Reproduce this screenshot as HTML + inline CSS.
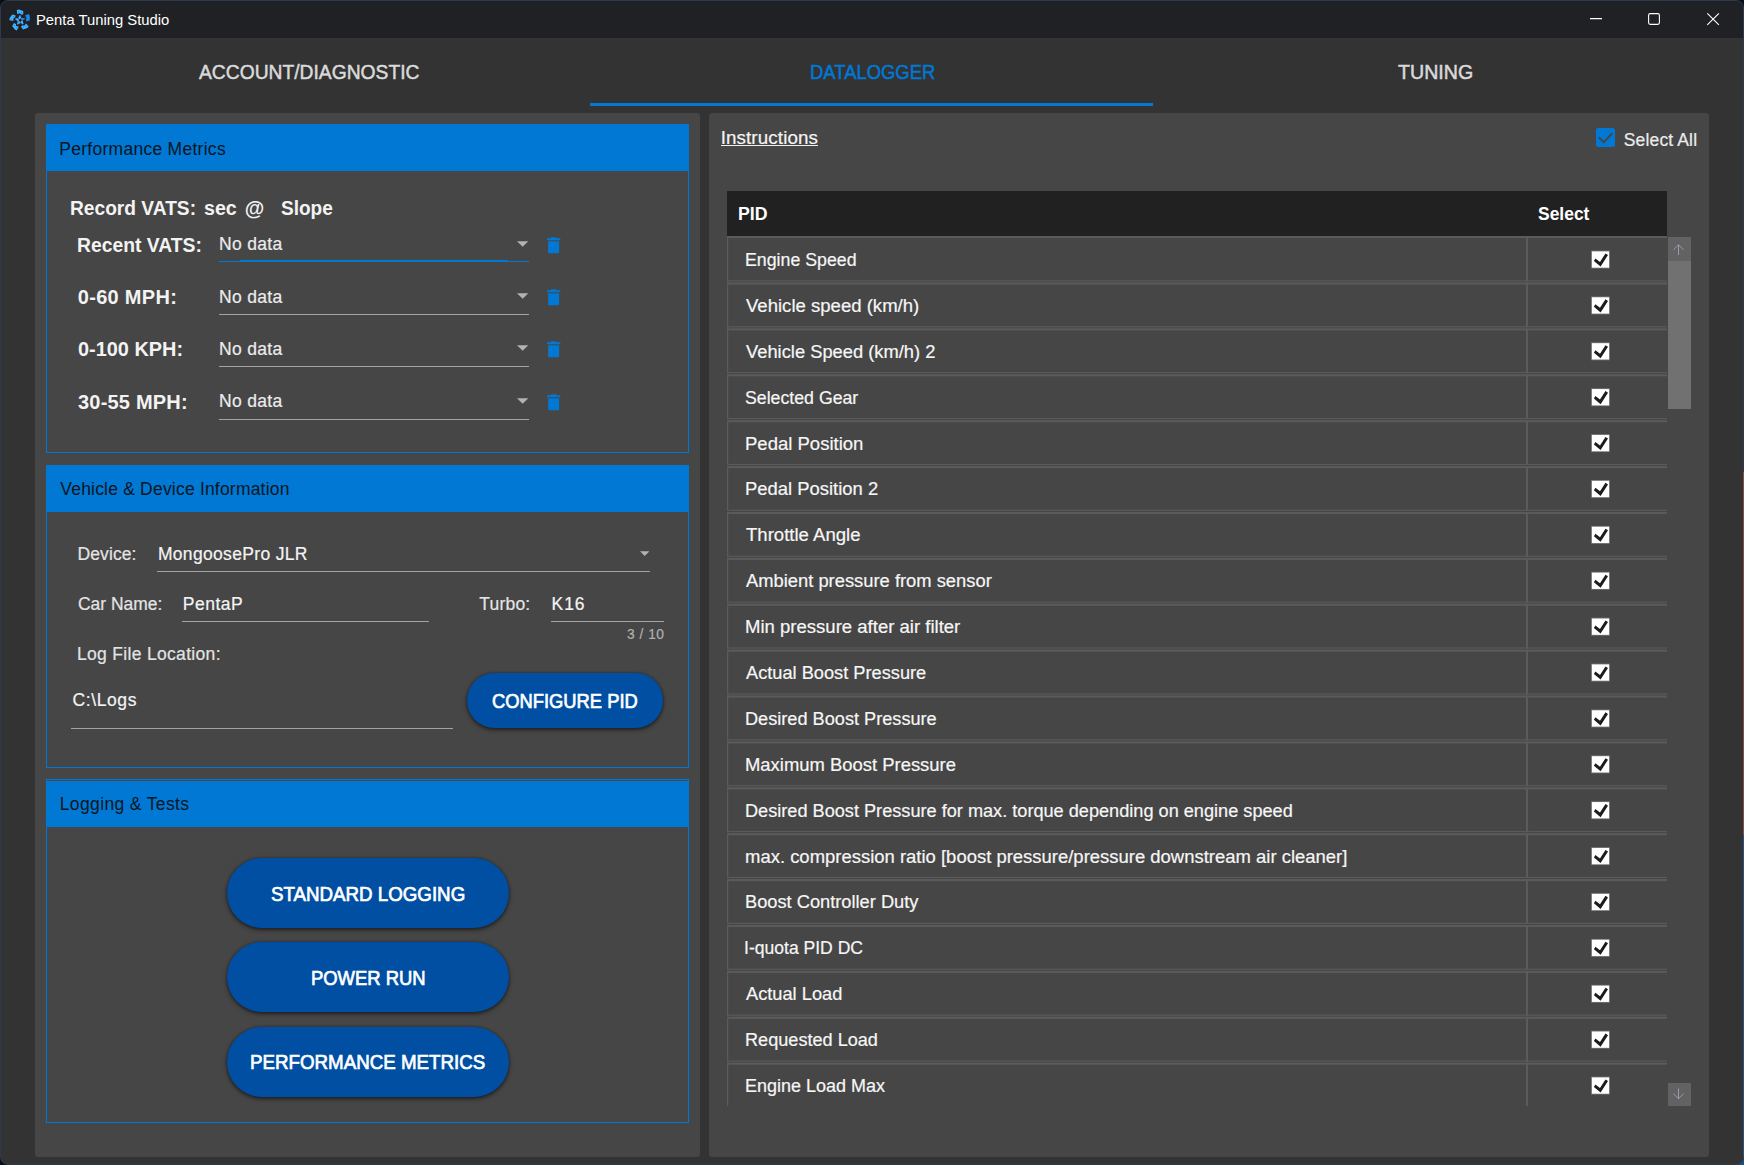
<!DOCTYPE html>
<html lang="en"><head><meta charset="utf-8"><title>Penta Tuning Studio</title>
<style>
html,body{margin:0;padding:0;}
body{width:1744px;height:1165px;overflow:hidden;background:#071019;position:relative;font-family:"Liberation Sans",sans-serif;color:#fff;}
#win{position:absolute;left:0;top:0;width:1742px;height:1163px;border:1px solid #2c3a4c;border-radius:8px;background:#333333;overflow:hidden;}
#win>*{margin-left:-1px;margin-top:-1px;}
.t{position:absolute;white-space:nowrap;transform-origin:0 50%;}
.b{font-weight:bold;}
.m{-webkit-text-stroke:0.5px currentColor;}
.s{-webkit-text-stroke:0.2px currentColor;}
.m2{-webkit-text-stroke:0.7px currentColor;}
.btn{position:absolute;background:#004fa3;box-shadow:0 2px 4px rgba(0,0,0,.5),0 0 3px rgba(0,0,0,.35);}
</style></head><body><div id="win">
<div style="position:absolute;left:0px;top:0px;width:1744px;height:38px;background:#1f2125;"></div>
<svg style="position:absolute;left:8px;top:7.6px" width="24" height="24" viewBox="0 0 24 24"><g transform="translate(12.1 12.2)" fill="#43b3ff"><g transform="rotate(0)"><path d="M-3.3 -10.2L-1.2 -10.6L3.1 -9.3L3.2 -5.9L1.2 -5.5L-0.2 -6.9L-2.9 -6.1Z"/><path d="M0.3 -5.0L1.1 -2.2L-0.5 -0.9L-2.1 -2.1L-0.9 -3.6L-0.9 -4.9Z"/><circle cx="-1.6" cy="-8.6" r="0.55" fill="#0b84ee"/><circle cx="1.4" cy="-7.6" r="0.55" fill="#0b84ee"/></g><g transform="rotate(72)" fill="#1e86e4"><path d="M-3.3 -10.2L-1.2 -10.6L3.1 -9.3L3.2 -5.9L1.2 -5.5L-0.2 -6.9L-2.9 -6.1Z"/><path d="M0.3 -5.0L1.1 -2.2L-0.5 -0.9L-2.1 -2.1L-0.9 -3.6L-0.9 -4.9Z"/><circle cx="-1.6" cy="-8.6" r="0.55" fill="#0b84ee"/><circle cx="1.4" cy="-7.6" r="0.55" fill="#0b84ee"/></g><g transform="rotate(144)"><path d="M-3.3 -10.2L-1.2 -10.6L3.1 -9.3L3.2 -5.9L1.2 -5.5L-0.2 -6.9L-2.9 -6.1Z"/><path d="M0.3 -5.0L1.1 -2.2L-0.5 -0.9L-2.1 -2.1L-0.9 -3.6L-0.9 -4.9Z"/><circle cx="-1.6" cy="-8.6" r="0.55" fill="#0b84ee"/><circle cx="1.4" cy="-7.6" r="0.55" fill="#0b84ee"/></g><g transform="rotate(216)"><path d="M-3.3 -10.2L-1.2 -10.6L3.1 -9.3L3.2 -5.9L1.2 -5.5L-0.2 -6.9L-2.9 -6.1Z"/><path d="M0.3 -5.0L1.1 -2.2L-0.5 -0.9L-2.1 -2.1L-0.9 -3.6L-0.9 -4.9Z"/><circle cx="-1.6" cy="-8.6" r="0.55" fill="#0b84ee"/><circle cx="1.4" cy="-7.6" r="0.55" fill="#0b84ee"/></g><g transform="rotate(288)"><path d="M-3.3 -10.2L-1.2 -10.6L3.1 -9.3L3.2 -5.9L1.2 -5.5L-0.2 -6.9L-2.9 -6.1Z"/><path d="M0.3 -5.0L1.1 -2.2L-0.5 -0.9L-2.1 -2.1L-0.9 -3.6L-0.9 -4.9Z"/><circle cx="-1.6" cy="-8.6" r="0.55" fill="#0b84ee"/><circle cx="1.4" cy="-7.6" r="0.55" fill="#0b84ee"/></g></g></svg>
<span id="title" class="t " style="left:35.50px;top:11.00px;font-size:15px;line-height:18.0px;transform:scaleX(0.9863);">Penta Tuning Studio</span>
<svg style="position:absolute;left:1580px;top:0" width="164" height="37" viewBox="0 0 164 37" fill="none" stroke="#fff" stroke-width="1.1">
<path d="M10 18.6h12"/>
<rect x="68.6" y="13.6" width="10.8" height="10.8" rx="1.6"/>
<path d="M127.3 13.3l11.6 11.6M138.9 13.3l-11.6 11.6"/>
</svg>
<span id="tab1" class="t m" style="left:199.19px;top:60.01px;font-size:20px;line-height:24.0px;color:#dadada;transform:scaleX(0.9631);">ACCOUNT/DIAGNOSTIC</span>
<span id="tab2" class="t m" style="left:809.60px;top:60.01px;font-size:20px;line-height:24.0px;color:#0078d4;transform:scaleX(0.9217);">DATALOGGER</span>
<span id="tab3" class="t m" style="left:1398.00px;top:60.01px;font-size:20px;line-height:24.0px;color:#dadada;transform:scaleX(0.9817);">TUNING</span>
<div style="position:absolute;left:590px;top:103px;width:563px;height:3px;background:#0078d4;"></div>
<div style="position:absolute;left:35px;top:113px;width:665px;height:1044px;background:#464646;border-radius:3px;"></div>
<div style="position:absolute;left:709px;top:113px;width:1000px;height:1044px;background:#464646;border-radius:3px;"></div>
<div style="position:absolute;left:46px;top:124px;width:643px;height:329px;background:transparent;box-sizing:border-box;border:1px solid #0078d4;"></div>
<div style="position:absolute;left:46px;top:124px;width:643px;height:47px;background:#0078d4;"></div>
<span id="g1" class="t " style="left:59.26px;top:139.00px;font-size:17.5px;line-height:21.0px;color:#0b1622;letter-spacing:0.276px;">Performance Metrics</span>
<div style="position:absolute;left:46px;top:465px;width:643px;height:303px;background:transparent;box-sizing:border-box;border:1px solid #0078d4;"></div>
<div style="position:absolute;left:46px;top:465px;width:643px;height:47px;background:#0078d4;"></div>
<span id="g2" class="t " style="left:60.30px;top:479.00px;font-size:17.5px;line-height:21.0px;color:#0b1622;letter-spacing:0.200px;">Vehicle &amp; Device Information</span>
<div style="position:absolute;left:46px;top:779px;width:643px;height:344px;background:transparent;box-sizing:border-box;border:1px solid #0078d4;"></div>
<div style="position:absolute;left:46px;top:781px;width:643px;height:46px;background:#0078d4;"></div>
<span id="g3" class="t " style="left:59.75px;top:794.00px;font-size:17.5px;line-height:21.0px;color:#0b1622;letter-spacing:0.363px;">Logging &amp; Tests</span>
<span id="rv1" class="t b" style="left:70.00px;top:196.01px;font-size:20px;line-height:24.0px;color:#f3f3f3;transform:scaleX(0.9584);">Record VATS:</span>
<span id="rv2" class="t b" style="left:203.75px;top:196.01px;font-size:20px;line-height:24.0px;color:#f3f3f3;transform:scaleX(0.9800);">sec</span>
<span id="rv3" class="t b" style="left:244.72px;top:196.01px;font-size:20px;line-height:24.0px;color:#f3f3f3;">@</span>
<span id="rv4" class="t b" style="left:280.80px;top:196.01px;font-size:20px;line-height:24.0px;color:#f3f3f3;transform:scaleX(0.9517);">Slope</span>
<span id="pl0" class="t b" style="left:77.28px;top:233.01px;font-size:20px;line-height:24.0px;color:#f3f3f3;transform:scaleX(0.9655);">Recent VATS:</span>
<span id="pv0" class="t s" style="left:218.98px;top:234.00px;font-size:17.5px;line-height:21.0px;color:#ececec;letter-spacing:0.325px;">No data</span>
<div style="position:absolute;left:219px;top:261px;width:310px;height:1px;background:#0078d4;"></div>
<div style="position:absolute;left:240px;top:260px;width:268px;height:2px;background:#0078d4;"></div>
<svg style="position:absolute;left:516.8px;top:241px" width="11.4" height="6" viewBox="0 0 12 6"><path fill="#b2b2b2" d="M0 0h12L6 6z"/></svg>
<svg style="position:absolute;left:546.9px;top:236.7px" width="14" height="17" viewBox="0 0 14 17"><path fill="#0078d4" d="M1.1 4.3h11v10.7a1.3 1.3 0 0 1-1.3 1.3H2.4a1.3 1.3 0 0 1-1.3-1.3zM0 1.2h3.3l0.9-1h4.8l0.9 1H13.3v2.1H0z"/></svg>
<span id="pl1" class="t b" style="left:77.79px;top:285.01px;font-size:20px;line-height:24.0px;color:#f3f3f3;letter-spacing:0.298px;">0-60 MPH:</span>
<span id="pv1" class="t s" style="left:218.98px;top:287.00px;font-size:17.5px;line-height:21.0px;color:#ececec;letter-spacing:0.325px;">No data</span>
<div style="position:absolute;left:219px;top:314px;width:310px;height:1px;background:#a3a3a3;"></div>
<svg style="position:absolute;left:516.8px;top:293px" width="11.4" height="6" viewBox="0 0 12 6"><path fill="#b2b2b2" d="M0 0h12L6 6z"/></svg>
<svg style="position:absolute;left:546.9px;top:288.7px" width="14" height="17" viewBox="0 0 14 17"><path fill="#0078d4" d="M1.1 4.3h11v10.7a1.3 1.3 0 0 1-1.3 1.3H2.4a1.3 1.3 0 0 1-1.3-1.3zM0 1.2h3.3l0.9-1h4.8l0.9 1H13.3v2.1H0z"/></svg>
<span id="pl2" class="t b" style="left:78.11px;top:337.01px;font-size:20px;line-height:24.0px;color:#f3f3f3;transform:scaleX(0.9947);">0-100 KPH:</span>
<span id="pv2" class="t s" style="left:218.98px;top:339.00px;font-size:17.5px;line-height:21.0px;color:#ececec;letter-spacing:0.325px;">No data</span>
<div style="position:absolute;left:219px;top:366px;width:310px;height:1px;background:#a3a3a3;"></div>
<svg style="position:absolute;left:516.8px;top:345px" width="11.4" height="6" viewBox="0 0 12 6"><path fill="#b2b2b2" d="M0 0h12L6 6z"/></svg>
<svg style="position:absolute;left:546.9px;top:340.7px" width="14" height="17" viewBox="0 0 14 17"><path fill="#0078d4" d="M1.1 4.3h11v10.7a1.3 1.3 0 0 1-1.3 1.3H2.4a1.3 1.3 0 0 1-1.3-1.3zM0 1.2h3.3l0.9-1h4.8l0.9 1H13.3v2.1H0z"/></svg>
<span id="pl3" class="t b" style="left:78.00px;top:390.01px;font-size:20px;line-height:24.0px;color:#f3f3f3;letter-spacing:0.201px;">30-55 MPH:</span>
<span id="pv3" class="t s" style="left:218.98px;top:391.00px;font-size:17.5px;line-height:21.0px;color:#ececec;letter-spacing:0.325px;">No data</span>
<div style="position:absolute;left:219px;top:419px;width:310px;height:1px;background:#a3a3a3;"></div>
<svg style="position:absolute;left:516.8px;top:398px" width="11.4" height="6" viewBox="0 0 12 6"><path fill="#b2b2b2" d="M0 0h12L6 6z"/></svg>
<svg style="position:absolute;left:546.9px;top:393.7px" width="14" height="17" viewBox="0 0 14 17"><path fill="#0078d4" d="M1.1 4.3h11v10.7a1.3 1.3 0 0 1-1.3 1.3H2.4a1.3 1.3 0 0 1-1.3-1.3zM0 1.2h3.3l0.9-1h4.8l0.9 1H13.3v2.1H0z"/></svg>
<span id="d1" class="t s" style="left:77.54px;top:544.00px;font-size:17.5px;line-height:21.0px;color:#e4e4e4;letter-spacing:0.093px;">Device:</span>
<span id="d2" class="t s" style="left:157.88px;top:544.00px;font-size:17.5px;line-height:21.0px;color:#f4f4f4;letter-spacing:0.330px;">MongoosePro JLR</span>
<div style="position:absolute;left:157px;top:571px;width:493px;height:1px;background:#a3a3a3;"></div>
<svg style="position:absolute;left:639.8px;top:551px" width="9.4" height="5.2" viewBox="0 0 12 6"><path fill="#b2b2b2" d="M0 0h12L6 6z"/></svg>
<span id="d3" class="t s" style="left:77.95px;top:594.00px;font-size:17.5px;line-height:21.0px;color:#e4e4e4;transform:scaleX(0.9958);">Car Name:</span>
<span id="d4" class="t s" style="left:182.74px;top:594.00px;font-size:17.5px;line-height:21.0px;color:#f4f4f4;letter-spacing:0.522px;">PentaP</span>
<div style="position:absolute;left:182px;top:621px;width:247px;height:1px;background:#a3a3a3;"></div>
<span id="d5" class="t s" style="left:479.33px;top:594.00px;font-size:17.5px;line-height:21.0px;color:#e4e4e4;letter-spacing:0.188px;">Turbo:</span>
<span id="d6" class="t s" style="left:551.48px;top:594.00px;font-size:17.5px;line-height:21.0px;color:#f4f4f4;letter-spacing:0.987px;">K16</span>
<div style="position:absolute;left:551px;top:621px;width:113px;height:1px;background:#a3a3a3;"></div>
<span id="d7" class="t s" style="left:626.98px;top:627.01px;font-size:13.75px;line-height:16.5px;color:#b0b0b0;letter-spacing:0.522px;">3 / 10</span>
<span id="d8" class="t s" style="left:76.98px;top:644.00px;font-size:17.5px;line-height:21.0px;color:#e4e4e4;letter-spacing:0.318px;">Log File Location:</span>
<span id="d9" class="t s" style="left:72.52px;top:690.00px;font-size:17.5px;line-height:21.0px;color:#f4f4f4;letter-spacing:0.603px;">C:\Logs</span>
<div style="position:absolute;left:71px;top:728px;width:382px;height:1px;background:#a3a3a3;"></div>
<div class="btn" style="left:467px;top:672.6px;width:196px;height:55.5px;border-radius:28px"></div>
<span id="b0" class="t m2" style="left:492.39px;top:689.01px;font-size:20px;line-height:24.0px;transform:scaleX(0.9174);">CONFIGURE PID</span>
<div class="btn" style="left:226.7px;top:858px;width:282px;height:69.7px;border-radius:35px"></div>
<span id="b1" class="t m2" style="left:271.30px;top:882.01px;font-size:20px;line-height:24.0px;transform:scaleX(0.9362);">STANDARD LOGGING</span>
<div class="btn" style="left:226.7px;top:942.3px;width:282px;height:69.7px;border-radius:35px"></div>
<span id="b2" class="t m2" style="left:311.15px;top:966.01px;font-size:20px;line-height:24.0px;transform:scaleX(0.9211);">POWER RUN</span>
<div class="btn" style="left:226.7px;top:1027px;width:282px;height:69.7px;border-radius:35px"></div>
<span id="b3" class="t m2" style="left:250.21px;top:1050.01px;font-size:20px;line-height:24.0px;transform:scaleX(0.9369);">PERFORMANCE METRICS</span>
<span id="ins" class="t s" style="left:720.65px;top:127.00px;font-size:18.75px;line-height:22.5px;color:#f4f4f4;letter-spacing:0.127px;">Instructions</span>
<div style="position:absolute;left:721px;top:144.8px;width:97px;height:1.4px;background:#f0f0f0;"></div>
<div style="position:absolute;left:1596px;top:128px;width:19px;height:19px;border-radius:2.5px;background:#0078d4"><svg width="19" height="19" viewBox="0 0 19 19" style="position:absolute;left:0;top:0"><path d="M2.8 9.4l5 4.9 8.6-9.2" fill="none" stroke="#464646" stroke-width="2"/></svg></div>
<span id="sa" class="t s" style="left:1623.80px;top:130.00px;font-size:17.5px;line-height:21.0px;color:#ececec;letter-spacing:0.139px;">Select All</span>
<div style="position:absolute;left:727px;top:191px;width:940px;height:45px;background:#212121;"></div>
<span id="th1" class="t b" style="left:738.01px;top:204.00px;font-size:17.5px;line-height:21.0px;transform:scaleX(1.0145);">PID</span>
<span id="th2" class="t b" style="left:1537.91px;top:204.00px;font-size:17.5px;line-height:21.0px;transform:scaleX(0.9973);">Select</span>
<svg style="position:absolute;left:727px;top:236px" width="940" height="870" viewBox="0 0 940 870" fill="#5b5b5b"><rect x="0" y="0.00" width="940" height="2.05"/><rect x="0" y="44.34" width="940" height="1.1"/><rect x="0" y="0.00" width="1.3" height="45.44"/><rect x="799" y="0.00" width="2.1" height="45.44"/><rect x="0" y="46.49" width="940" height="2.05"/><rect x="0" y="90.23" width="940" height="1.1"/><rect x="0" y="46.49" width="1.3" height="44.84"/><rect x="799" y="46.49" width="2.1" height="44.84"/><rect x="0" y="92.38" width="940" height="2.05"/><rect x="0" y="136.12" width="940" height="1.1"/><rect x="0" y="92.38" width="1.3" height="44.84"/><rect x="799" y="92.38" width="2.1" height="44.84"/><rect x="0" y="138.27" width="940" height="2.05"/><rect x="0" y="182.01" width="940" height="1.1"/><rect x="0" y="138.27" width="1.3" height="44.84"/><rect x="799" y="138.27" width="2.1" height="44.84"/><rect x="0" y="184.16" width="940" height="2.05"/><rect x="0" y="227.90" width="940" height="1.1"/><rect x="0" y="184.16" width="1.3" height="44.84"/><rect x="799" y="184.16" width="2.1" height="44.84"/><rect x="0" y="230.05" width="940" height="2.05"/><rect x="0" y="273.79" width="940" height="1.1"/><rect x="0" y="230.05" width="1.3" height="44.84"/><rect x="799" y="230.05" width="2.1" height="44.84"/><rect x="0" y="275.94" width="940" height="2.05"/><rect x="0" y="319.68" width="940" height="1.1"/><rect x="0" y="275.94" width="1.3" height="44.84"/><rect x="799" y="275.94" width="2.1" height="44.84"/><rect x="0" y="321.83" width="940" height="2.05"/><rect x="0" y="365.57" width="940" height="1.1"/><rect x="0" y="321.83" width="1.3" height="44.84"/><rect x="799" y="321.83" width="2.1" height="44.84"/><rect x="0" y="367.72" width="940" height="2.05"/><rect x="0" y="411.46" width="940" height="1.1"/><rect x="0" y="367.72" width="1.3" height="44.84"/><rect x="799" y="367.72" width="2.1" height="44.84"/><rect x="0" y="413.61" width="940" height="2.05"/><rect x="0" y="457.35" width="940" height="1.1"/><rect x="0" y="413.61" width="1.3" height="44.84"/><rect x="799" y="413.61" width="2.1" height="44.84"/><rect x="0" y="459.50" width="940" height="2.05"/><rect x="0" y="503.24" width="940" height="1.1"/><rect x="0" y="459.50" width="1.3" height="44.84"/><rect x="799" y="459.50" width="2.1" height="44.84"/><rect x="0" y="505.39" width="940" height="2.05"/><rect x="0" y="549.13" width="940" height="1.1"/><rect x="0" y="505.39" width="1.3" height="44.84"/><rect x="799" y="505.39" width="2.1" height="44.84"/><rect x="0" y="551.28" width="940" height="2.05"/><rect x="0" y="595.02" width="940" height="1.1"/><rect x="0" y="551.28" width="1.3" height="44.84"/><rect x="799" y="551.28" width="2.1" height="44.84"/><rect x="0" y="597.17" width="940" height="2.05"/><rect x="0" y="640.91" width="940" height="1.1"/><rect x="0" y="597.17" width="1.3" height="44.84"/><rect x="799" y="597.17" width="2.1" height="44.84"/><rect x="0" y="643.06" width="940" height="2.05"/><rect x="0" y="686.80" width="940" height="1.1"/><rect x="0" y="643.06" width="1.3" height="44.84"/><rect x="799" y="643.06" width="2.1" height="44.84"/><rect x="0" y="688.95" width="940" height="2.05"/><rect x="0" y="732.69" width="940" height="1.1"/><rect x="0" y="688.95" width="1.3" height="44.84"/><rect x="799" y="688.95" width="2.1" height="44.84"/><rect x="0" y="734.84" width="940" height="2.05"/><rect x="0" y="778.58" width="940" height="1.1"/><rect x="0" y="734.84" width="1.3" height="44.84"/><rect x="799" y="734.84" width="2.1" height="44.84"/><rect x="0" y="780.73" width="940" height="2.05"/><rect x="0" y="824.47" width="940" height="1.1"/><rect x="0" y="780.73" width="1.3" height="44.84"/><rect x="799" y="780.73" width="2.1" height="44.84"/><rect x="0" y="826.62" width="940" height="2.05"/><rect x="0" y="826.62" width="1.3" height="43.38"/><rect x="799" y="826.62" width="2.1" height="43.38"/><g transform="translate(864.1 14.60)"><rect width="18.7" height="17.9" fill="#777"/><rect x="0.8" y="0.8" width="17.2" height="16.3" fill="#fff"/><path d="M2.8 10.3L4.3 7.8L8.9 11.3L14.4 2.8L16.9 4.4L9.5 15.9Z" fill="#1c1c1c"/></g><g transform="translate(864.1 60.49)"><rect width="18.7" height="17.9" fill="#777"/><rect x="0.8" y="0.8" width="17.2" height="16.3" fill="#fff"/><path d="M2.8 10.3L4.3 7.8L8.9 11.3L14.4 2.8L16.9 4.4L9.5 15.9Z" fill="#1c1c1c"/></g><g transform="translate(864.1 106.38)"><rect width="18.7" height="17.9" fill="#777"/><rect x="0.8" y="0.8" width="17.2" height="16.3" fill="#fff"/><path d="M2.8 10.3L4.3 7.8L8.9 11.3L14.4 2.8L16.9 4.4L9.5 15.9Z" fill="#1c1c1c"/></g><g transform="translate(864.1 152.27)"><rect width="18.7" height="17.9" fill="#777"/><rect x="0.8" y="0.8" width="17.2" height="16.3" fill="#fff"/><path d="M2.8 10.3L4.3 7.8L8.9 11.3L14.4 2.8L16.9 4.4L9.5 15.9Z" fill="#1c1c1c"/></g><g transform="translate(864.1 198.16)"><rect width="18.7" height="17.9" fill="#777"/><rect x="0.8" y="0.8" width="17.2" height="16.3" fill="#fff"/><path d="M2.8 10.3L4.3 7.8L8.9 11.3L14.4 2.8L16.9 4.4L9.5 15.9Z" fill="#1c1c1c"/></g><g transform="translate(864.1 244.05)"><rect width="18.7" height="17.9" fill="#777"/><rect x="0.8" y="0.8" width="17.2" height="16.3" fill="#fff"/><path d="M2.8 10.3L4.3 7.8L8.9 11.3L14.4 2.8L16.9 4.4L9.5 15.9Z" fill="#1c1c1c"/></g><g transform="translate(864.1 289.94)"><rect width="18.7" height="17.9" fill="#777"/><rect x="0.8" y="0.8" width="17.2" height="16.3" fill="#fff"/><path d="M2.8 10.3L4.3 7.8L8.9 11.3L14.4 2.8L16.9 4.4L9.5 15.9Z" fill="#1c1c1c"/></g><g transform="translate(864.1 335.83)"><rect width="18.7" height="17.9" fill="#777"/><rect x="0.8" y="0.8" width="17.2" height="16.3" fill="#fff"/><path d="M2.8 10.3L4.3 7.8L8.9 11.3L14.4 2.8L16.9 4.4L9.5 15.9Z" fill="#1c1c1c"/></g><g transform="translate(864.1 381.72)"><rect width="18.7" height="17.9" fill="#777"/><rect x="0.8" y="0.8" width="17.2" height="16.3" fill="#fff"/><path d="M2.8 10.3L4.3 7.8L8.9 11.3L14.4 2.8L16.9 4.4L9.5 15.9Z" fill="#1c1c1c"/></g><g transform="translate(864.1 427.61)"><rect width="18.7" height="17.9" fill="#777"/><rect x="0.8" y="0.8" width="17.2" height="16.3" fill="#fff"/><path d="M2.8 10.3L4.3 7.8L8.9 11.3L14.4 2.8L16.9 4.4L9.5 15.9Z" fill="#1c1c1c"/></g><g transform="translate(864.1 473.50)"><rect width="18.7" height="17.9" fill="#777"/><rect x="0.8" y="0.8" width="17.2" height="16.3" fill="#fff"/><path d="M2.8 10.3L4.3 7.8L8.9 11.3L14.4 2.8L16.9 4.4L9.5 15.9Z" fill="#1c1c1c"/></g><g transform="translate(864.1 519.39)"><rect width="18.7" height="17.9" fill="#777"/><rect x="0.8" y="0.8" width="17.2" height="16.3" fill="#fff"/><path d="M2.8 10.3L4.3 7.8L8.9 11.3L14.4 2.8L16.9 4.4L9.5 15.9Z" fill="#1c1c1c"/></g><g transform="translate(864.1 565.28)"><rect width="18.7" height="17.9" fill="#777"/><rect x="0.8" y="0.8" width="17.2" height="16.3" fill="#fff"/><path d="M2.8 10.3L4.3 7.8L8.9 11.3L14.4 2.8L16.9 4.4L9.5 15.9Z" fill="#1c1c1c"/></g><g transform="translate(864.1 611.17)"><rect width="18.7" height="17.9" fill="#777"/><rect x="0.8" y="0.8" width="17.2" height="16.3" fill="#fff"/><path d="M2.8 10.3L4.3 7.8L8.9 11.3L14.4 2.8L16.9 4.4L9.5 15.9Z" fill="#1c1c1c"/></g><g transform="translate(864.1 657.06)"><rect width="18.7" height="17.9" fill="#777"/><rect x="0.8" y="0.8" width="17.2" height="16.3" fill="#fff"/><path d="M2.8 10.3L4.3 7.8L8.9 11.3L14.4 2.8L16.9 4.4L9.5 15.9Z" fill="#1c1c1c"/></g><g transform="translate(864.1 702.95)"><rect width="18.7" height="17.9" fill="#777"/><rect x="0.8" y="0.8" width="17.2" height="16.3" fill="#fff"/><path d="M2.8 10.3L4.3 7.8L8.9 11.3L14.4 2.8L16.9 4.4L9.5 15.9Z" fill="#1c1c1c"/></g><g transform="translate(864.1 748.84)"><rect width="18.7" height="17.9" fill="#777"/><rect x="0.8" y="0.8" width="17.2" height="16.3" fill="#fff"/><path d="M2.8 10.3L4.3 7.8L8.9 11.3L14.4 2.8L16.9 4.4L9.5 15.9Z" fill="#1c1c1c"/></g><g transform="translate(864.1 794.73)"><rect width="18.7" height="17.9" fill="#777"/><rect x="0.8" y="0.8" width="17.2" height="16.3" fill="#fff"/><path d="M2.8 10.3L4.3 7.8L8.9 11.3L14.4 2.8L16.9 4.4L9.5 15.9Z" fill="#1c1c1c"/></g><g transform="translate(864.1 840.62)"><rect width="18.7" height="17.9" fill="#777"/><rect x="0.8" y="0.8" width="17.2" height="16.3" fill="#fff"/><path d="M2.8 10.3L4.3 7.8L8.9 11.3L14.4 2.8L16.9 4.4L9.5 15.9Z" fill="#1c1c1c"/></g></svg>
<span id="r0" class="t s" style="left:745.08px;top:249.00px;font-size:18.75px;line-height:22.5px;color:#f6f6f6;transform:scaleX(0.9472);">Engine Speed</span>
<span id="r1" class="t s" style="left:746.21px;top:295.00px;font-size:18.75px;line-height:22.5px;color:#f6f6f6;transform:scaleX(0.9894);">Vehicle speed (km/h)</span>
<span id="r2" class="t s" style="left:746.21px;top:341.00px;font-size:18.75px;line-height:22.5px;color:#f6f6f6;transform:scaleX(0.9770);">Vehicle Speed (km/h) 2</span>
<span id="r3" class="t s" style="left:744.82px;top:387.00px;font-size:18.75px;line-height:22.5px;color:#f6f6f6;transform:scaleX(0.9450);">Selected Gear</span>
<span id="r4" class="t s" style="left:744.98px;top:433.00px;font-size:18.75px;line-height:22.5px;color:#f6f6f6;transform:scaleX(0.9878);">Pedal Position</span>
<span id="r5" class="t s" style="left:744.54px;top:478.00px;font-size:18.75px;line-height:22.5px;color:#f6f6f6;transform:scaleX(0.9827);">Pedal Position 2</span>
<span id="r6" class="t s" style="left:745.52px;top:524.00px;font-size:18.75px;line-height:22.5px;color:#f6f6f6;transform:scaleX(0.9903);">Throttle Angle</span>
<span id="r7" class="t s" style="left:745.58px;top:570.00px;font-size:18.75px;line-height:22.5px;color:#f6f6f6;transform:scaleX(0.9785);">Ambient pressure from sensor</span>
<span id="r8" class="t s" style="left:744.97px;top:616.00px;font-size:18.75px;line-height:22.5px;color:#f6f6f6;transform:scaleX(0.9885);">Min pressure after air filter</span>
<span id="r9" class="t s" style="left:745.58px;top:662.00px;font-size:18.75px;line-height:22.5px;color:#f6f6f6;transform:scaleX(0.9715);">Actual Boost Pressure</span>
<span id="r10" class="t s" style="left:744.80px;top:708.00px;font-size:18.75px;line-height:22.5px;color:#f6f6f6;transform:scaleX(0.9682);">Desired Boost Pressure</span>
<span id="r11" class="t s" style="left:744.60px;top:754.00px;font-size:18.75px;line-height:22.5px;color:#f6f6f6;transform:scaleX(0.9828);">Maximum Boost Pressure</span>
<span id="r12" class="t s" style="left:744.80px;top:800.00px;font-size:18.75px;line-height:22.5px;color:#f6f6f6;transform:scaleX(0.9678);">Desired Boost Pressure for max. torque depending on engine speed</span>
<span id="r13" class="t s" style="left:744.80px;top:846.00px;font-size:18.75px;line-height:22.5px;color:#f6f6f6;transform:scaleX(0.9847);">max. compression ratio [boost pressure/pressure downstream air cleaner]</span>
<span id="r14" class="t s" style="left:744.61px;top:891.00px;font-size:18.75px;line-height:22.5px;color:#f6f6f6;transform:scaleX(0.9733);">Boost Controller Duty</span>
<span id="r15" class="t s" style="left:744.20px;top:937.00px;font-size:18.75px;line-height:22.5px;color:#f6f6f6;transform:scaleX(0.9360);">I-quota PID DC</span>
<span id="r16" class="t s" style="left:745.58px;top:983.00px;font-size:18.75px;line-height:22.5px;color:#f6f6f6;transform:scaleX(0.9724);">Actual Load</span>
<span id="r17" class="t s" style="left:744.80px;top:1029.00px;font-size:18.75px;line-height:22.5px;color:#f6f6f6;transform:scaleX(0.9661);">Requested Load</span>
<span id="r18" class="t s" style="left:745.06px;top:1075.00px;font-size:18.75px;line-height:22.5px;color:#f6f6f6;transform:scaleX(0.9585);">Engine Load Max</span>
<div style="position:absolute;left:1668px;top:237px;width:23px;height:24px;background:#626262;"></div>
<div style="position:absolute;left:1668px;top:261px;width:23px;height:148px;background:#717171;"></div>
<div style="position:absolute;left:1668px;top:1083px;width:23px;height:23px;background:#626262;"></div>
<svg style="position:absolute;left:1668px;top:237px" width="23" height="24" viewBox="0 0 23 24" fill="none" stroke="#a9a9bd" stroke-width="0.8"><path d="M10.5 18V8M5.4 12.8l5.1-5 5.1 5"/></svg>
<svg style="position:absolute;left:1668px;top:1083px" width="23" height="23" viewBox="0 0 23 23" fill="none" stroke="#a9a9bd" stroke-width="0.8"><path d="M10.5 5.5V15.5M5.4 10.7l5.1 5 5.1-5"/></svg>
</div><div style="position:absolute;left:1743px;top:472px;width:1px;height:363px;background:#8c4a46;"></div>
<div style="position:absolute;left:1743px;top:835px;width:1px;height:322px;background:#2b4f86;"></div>
<div style="position:absolute;left:1736px;top:1157px;width:8px;height:8px;background:#1d4f8f;z-index:-1;"></div>
</body></html>
